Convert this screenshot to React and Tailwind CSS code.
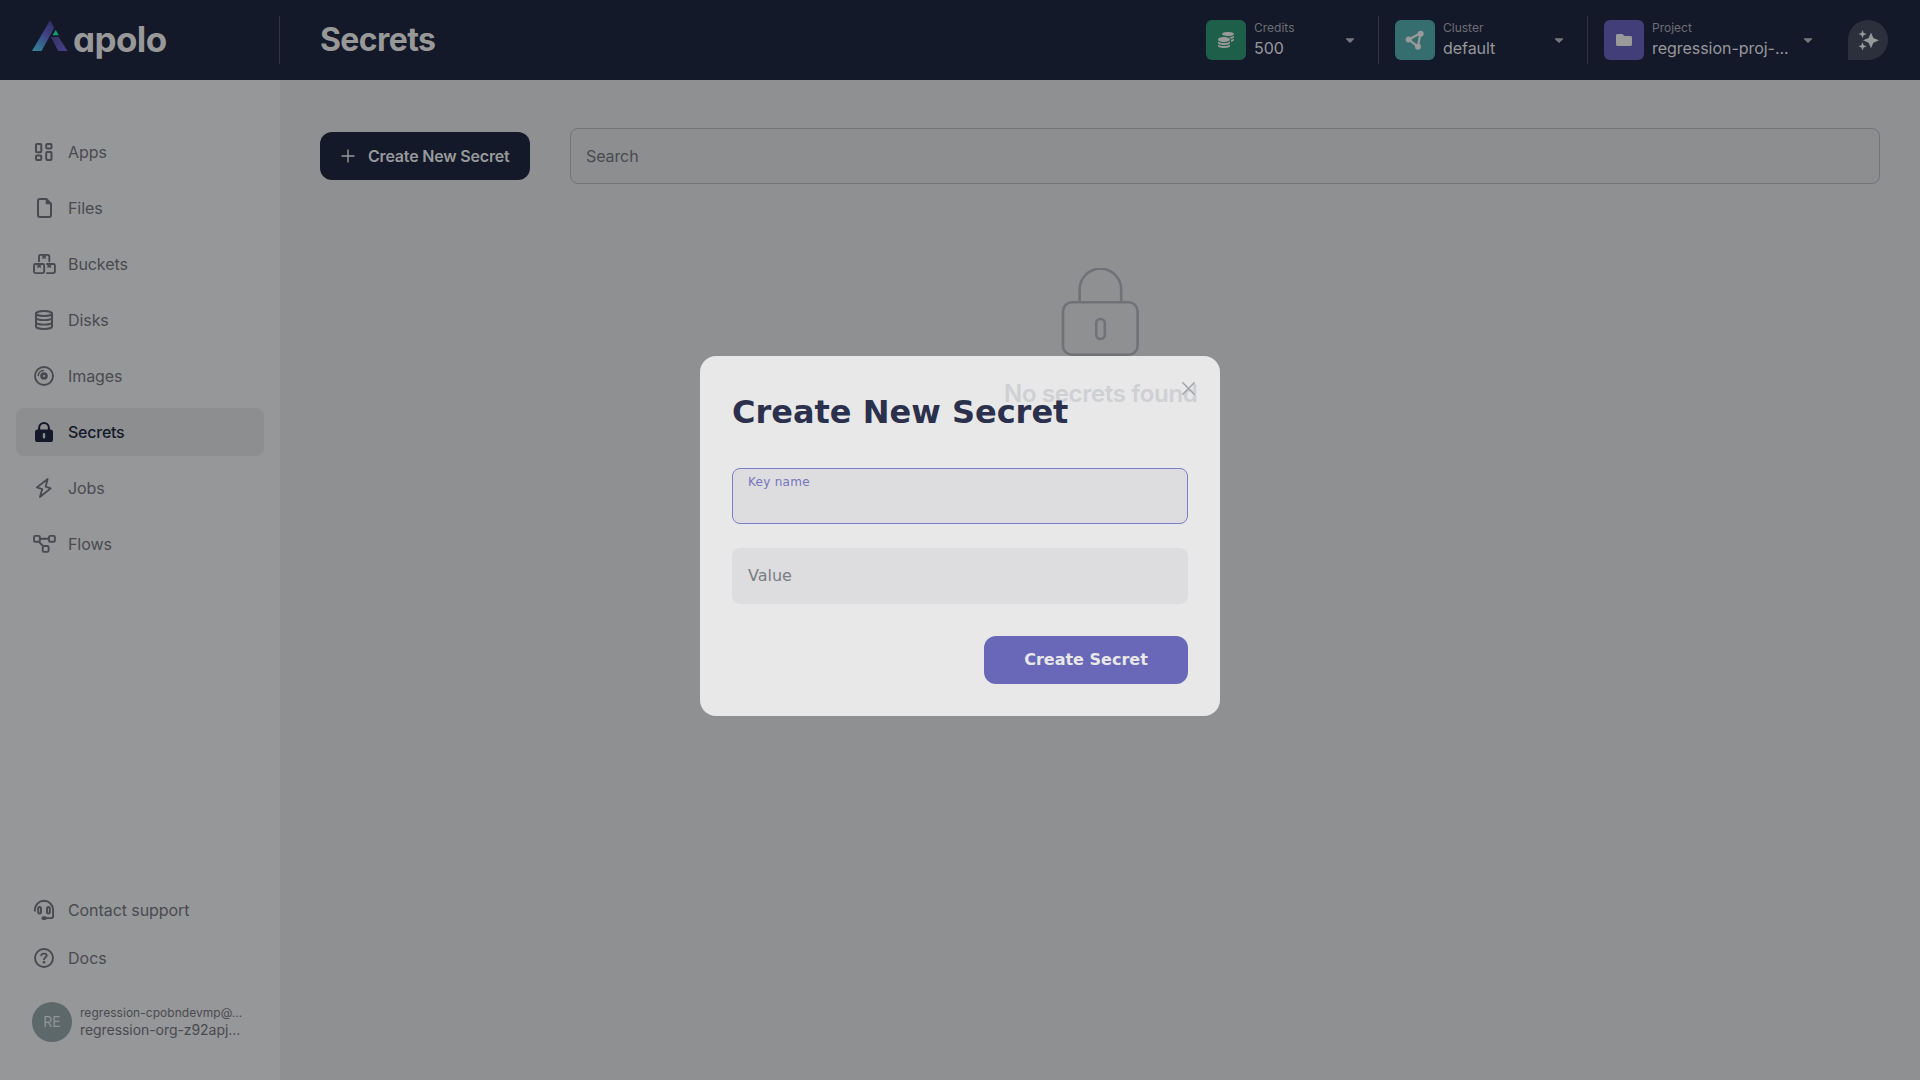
import React from "react";
import { FaCoins, FaCaretDown, FaFolder } from "react-icons/fa";

function Svg({ children, size = 24, className = "" }) {
  return (
    <svg
      width={size}
      height={size}
      viewBox="0 0 24 24"
      fill="none"
      stroke="currentColor"
      strokeWidth="2"
      strokeLinejoin="round"
      strokeLinecap="round"
      className={"shrink-0 overflow-visible " + className}
    >
      {children}
    </svg>
  );
}

const icons = {
  apps: (
    <Svg>
      <rect x="4" y="4" width="5.3" height="8.2" rx="1" />
      <rect x="4" y="15.6" width="5.3" height="4.5" rx="1" />
      <rect x="14.2" y="4" width="5.3" height="4.5" rx="1" />
      <rect x="14.2" y="11.9" width="5.3" height="8.2" rx="1" />
    </Svg>
  ),
  files: (
    <Svg>
      <path d="M14.4 3H7.9A1.9 1.9 0 0 0 6 4.900v14.200A1.900 1.900 0 0 0 7.900 21h9.200a1.900 1.900 0 0 0 1.900-1.900V7.600z" />
      <path d="M14.200 3v4.800H19z" fill="currentColor" strokeWidth="1" />
    </Svg>
  ),
  buckets: (
    <Svg>
      <path d="M7 9.300V4.400A1.500 1.500 0 0 1 8.500 2.900h7.300a1.500 1.500 0 0 1 1.500 1.500v4.900" strokeWidth="1.900" />
      <rect x="2" y="12" width="10.200" height="9.100" rx="1.500" strokeWidth="1.900" />
      <path d="M15 12h6.400a1.500 1.500 0 0 1 1.500 1.500v6.100a1.500 1.500 0 0 1-1.500 1.500h-6.400" strokeWidth="1.900" />
      <path
        d="M10.700 3.200h3v3.600l-1.500-.9-1.500.9zM5.600 12.200h3v3.600l-1.500-.9-1.500.9zM15.800 12.200h3v3.600l-1.500-.9-1.500.9z"
        fill="currentColor"
        strokeWidth="0.400"
      />
    </Svg>
  ),
  disks: (
    <Svg>
      <ellipse cx="12" cy="5.500" rx="8" ry="2.500" />
      <path d="M4 5.500v13c0 1.400 3.600 2.500 8 2.500s8-1.100 8-2.500v-13" />
      <path d="M4 9.700c0 1.400 3.600 2.500 8 2.500s8-1.100 8-2.500M4 14.200c0 1.400 3.600 2.500 8 2.500s8-1.100 8-2.500" strokeWidth="1.800" />
    </Svg>
  ),
  images: (
    <Svg>
      <circle cx="12" cy="12" r="9" strokeWidth="1.900" />
      <circle cx="12" cy="12" r="2.400" strokeWidth="2.800" />
      <path d="M6.300 11.600a5.500 5.500 0 0 1 5.200-5.200" strokeWidth="1.500" />
    </Svg>
  ),
  secrets: (
    <Svg>
      <path d="M7.100 11V7.900a4.900 4.900 0 0 1 9.800 0V11" strokeWidth="2.100" />
      <path
        d="M5.600 9.500h12.800A2.600 2.600 0 0 1 21 12.100v7.300a2.600 2.600 0 0 1-2.600 2.600H5.600A2.600 2.600 0 0 1 3 19.400v-7.300a2.600 2.600 0 0 1 2.600-2.600zM12 13a1.200 1.200 0 0 0-1.200 1.200v3a1.200 1.200 0 0 0 2.400 0v-3A1.200 1.200 0 0 0 12 13z"
        fill="currentColor"
        fillRule="evenodd"
        stroke="none"
      />
    </Svg>
  ),
  jobs: (
    <Svg>
      <path d="M15.700 3 4.900 11.400l5.300 1.800L7.900 21l10.800-8.600-5.100-1.800z" strokeWidth="1.800" />
    </Svg>
  ),
  flows: (
    <Svg>
      <rect x="2" y="3.900" width="5.900" height="5.900" rx="1.300" strokeWidth="1.900" />
      <rect x="17" y="3.900" width="5.900" height="5.900" rx="1.300" strokeWidth="1.900" />
      <rect x="10.700" y="14" width="5.900" height="5.900" rx="1.300" strokeWidth="1.900" />
      <path d="M8 6.800h9M7 9.800l4.300 4.600" strokeWidth="1.900" />
    </Svg>
  ),
  support: (
    <Svg>
      <path d="M2.900 12.800V11.900a9.100 9.100 0 0 1 18.200 0v6a2.200 2.200 0 0 1-2.200 2.200h-5" strokeWidth="1.900" />
      <rect x="6.200" y="9.100" width="2.800" height="6.400" rx="1.300" />
      <rect x="15" y="9.100" width="2.800" height="6.400" rx="1.300" />
      <path d="M11.300 20.100h1.700" strokeWidth="3.800" />
    </Svg>
  ),
  docs: (
    <Svg>
      <circle cx="12" cy="12" r="9" strokeWidth="1.900" />
      <path d="M9.300 9.400c.2-1.200 1.100-1.800 2.300-1.800h.8c1.300 0 2.300.8 2.300 2 0 1.800-2.600 1.900-2.600 3.600" strokeWidth="1.900" />
      <circle cx="12" cy="16.200" r="1.300" fill="currentColor" stroke="none" />
    </Svg>
  ),
};

const nav = [
  ["apps", "Apps"],
  ["files", "Files"],
  ["buckets", "Buckets"],
  ["disks", "Disks"],
  ["images", "Images"],
  ["secrets", "Secrets"],
  ["jobs", "Jobs"],
  ["flows", "Flows"],
];

function Logo() {
  return (
    <div className="flex items-center">
      <svg width="36" height="32" viewBox="0 0 36 32" className="mb-2 shrink-0">
        <defs>
          <linearGradient id="left" x1="0.1" y1="1" x2="0.8" y2="0">
            <stop offset="0" stopColor="#2f8795" />
            <stop offset="0.6" stopColor="#414285" />
            <stop offset="1" stopColor="#34306a" />
          </linearGradient>
          <linearGradient id="right" x1="0" y1="0" x2="1" y2="1">
            <stop offset="0" stopColor="#343363" />
            <stop offset="1" stopColor="#45408a" />
          </linearGradient>
        </defs>
        <path d="M0 31 18 0.500l4.300 7.200L9.500 31z" fill="url(#left)" />
        <path d="M18.800 17h7.900L35.500 31h-9.200z" fill="url(#right)" />
        <path d="m23.700 10 3.200 5.200h-6.400z" fill="#0f9f6c" />
      </svg>
      <span className="-mt-0.5 ml-[5px] text-[35px] leading-[40px] font-bold tracking-[-0.6px] text-[#989898] [font-feature-settings:'cv11']">
        apolo
      </span>
    </div>
  );
}

function Picker({ width, tile, icon, label, value, caret = "mr-[5px]" }) {
  return (
    <div className={"flex h-12 items-center px-4 " + width}>
      <div className={"flex size-10 shrink-0 items-center justify-center rounded-md text-[#9a9a9b] " + tile}>
        {icon}
      </div>
      <div className="ml-2 flex flex-col">
        <span className="text-xs leading-4 text-[#6c6d73]">{label}</span>
        <span className="text-base leading-6 tracking-[-0.04px] whitespace-nowrap text-[#97989a]">{value}</span>
      </div>
      <FaCaretDown className={"ml-auto size-3.5 shrink-0 text-[#77787d] " + caret} />
    </div>
  );
}

export default function App() {
  return (
    <div className="relative flex h-[1080px] w-[1920px] flex-col overflow-hidden bg-[#8f9092] font-['Inter',sans-serif] text-base text-[#494a51]">
      <header className="flex h-20 shrink-0 items-center bg-[#14192a]">
        <div className="flex h-12 w-[280px] items-center border-r border-[#33343f] pl-8">
          <Logo />
        </div>
        <h1 className="ml-10 text-[32px] leading-10 font-bold tracking-[-0.6px] text-[#989899]">Secrets</h1>
        <div className="ml-auto flex items-center pr-8">
          <Picker width="w-[188px]" tile="bg-[#1e5f49]" icon={<FaCoins className="size-4" />} label="Credits" value="500" />
          <div className="h-12 w-px bg-[#33343f]" />
          <Picker
            width="w-[208px]"
            tile="bg-[#366e70]"
            icon={
              <Svg size={20}>
                <path d="m4.500 11.500 14-7.500-3 16z" strokeWidth="2.700" />
                <circle cx="4.500" cy="11.500" r="3.600" fill="currentColor" stroke="none" />
                <circle cx="18.800" cy="4.500" r="3.600" fill="currentColor" stroke="none" />
                <circle cx="15.500" cy="20" r="3.600" fill="currentColor" stroke="none" />
              </Svg>
            }
            label="Cluster"
            value="default"
          />
          <div className="h-12 w-px bg-[#33343f]" />
          <Picker
            width="w-[244px]"
            tile="bg-[#413e78]"
            icon={<FaFolder className="size-4" />}
            label="Project"
            value="regression-proj-..."
            caret="mr-px"
          />
          <div className="ml-4 flex size-10 items-center justify-center rounded-full rounded-bl-none bg-[#2b303c] text-[#98999a]">
            <svg width="20" height="20" viewBox="0 0 20 20" fill="currentColor" className="overflow-visible">
              <path d="M13 2.500 15.400 8l5.600 2.300-5.600 2.400-2.400 5.500-2.400-5.500L5 10.300 10.600 8z" />
              <path d="m4.500 0 1.200 2.900L8.700 4 5.700 5.200 4.500 8 3.400 5.200.5 4l2.900-1.100zM4.500 12.300l1.200 2.900 3 1.100-3 1.200-1.200 2.800-1.100-2.800-2.900-1.200 2.900-1.100z" />
            </svg>
          </div>
        </div>
      </header>

      <div className="flex flex-1">
        <aside className="flex w-[280px] flex-col bg-[#969798] px-4 pt-12 pb-[38px]">
          <nav className="flex flex-col gap-2">
            {nav.map(([id, label]) => (
              <a
                key={id}
                className={
                  "flex h-12 items-center gap-3 rounded-lg px-4 " +
                  (id === "secrets"
                    ? "bg-[#8d8e90] font-medium tracking-[-0.24px] text-[#14192a]"
                    : "tracking-[-0.08px]")
                }
              >
                {icons[id]}
                <span>{label}</span>
              </a>
            ))}
          </nav>
          <div className="mt-auto flex flex-col">
            <a className="flex h-12 items-center gap-3 px-4 tracking-[-0.08px]">
              {icons.support}
              <span>Contact support</span>
            </a>
            <a className="flex h-12 items-center gap-3 px-4">
              {icons.docs}
              <span>Docs</span>
            </a>
            <div className="mt-5 flex items-center gap-2 px-4">
              <div className="flex size-10 shrink-0 items-center justify-center rounded-full bg-[#5d686a] text-sm text-[#8f9496]">
                RE
              </div>
              <div className="flex flex-col whitespace-nowrap">
                <span className="text-xs leading-4 tracking-[0.04px]">regression-cpobndevmp@...</span>
                <span className="text-sm leading-[18px] tracking-[-0.06px]">regression-org-z92apj...</span>
              </div>
            </div>
          </div>
        </aside>

        <main className="flex flex-1 flex-col px-10 pt-12">
          <div className="flex items-center gap-10">
            <button className="flex h-12 w-[210px] items-center rounded-xl bg-[#14192a] pl-5 font-semibold text-[#98999a]">
              <svg width="16" height="16" viewBox="0 0 16 16" stroke="currentColor" strokeWidth="1.400" strokeLinecap="round">
                <path d="M8 2v12M2 8h12" />
              </svg>
              <span className="ml-3 tracking-[-0.19px] whitespace-nowrap">Create New Secret</span>
            </button>
            <div className="flex h-14 flex-1 items-center rounded-lg border border-[#737479] bg-[#8d8e90] px-[15px] tracking-[-0.1px]">
              Search
            </div>
          </div>
          <div className="mt-[84px] flex flex-col items-center">
            <svg width="78" height="89" viewBox="0 0 78 89" fill="none" stroke="#717278" strokeWidth="2.600">
              <path d="M18.600 34V21.500a20.800 20.800 0 0 1 41.600 0V34" />
              <rect x="2" y="34.300" width="74.600" height="52.500" rx="9" />
              <rect x="35.200" y="51" width="8.600" height="20" rx="4.300" />
            </svg>
          </div>
        </main>
      </div>

      <div className="absolute top-[356px] left-[700px] flex h-[360px] w-[520px] flex-col rounded-2xl bg-[#e8e8e8] p-8 font-['DejaVu_Sans',sans-serif]">
        <span className="absolute top-[22px] left-[304px] font-['Inter',sans-serif] text-2xl leading-8 font-semibold tracking-[-0.33px] whitespace-nowrap text-[#cfd0d4]">
          No secrets found
        </span>
        <h2 className="relative mt-1 text-[32px] leading-10 font-bold whitespace-nowrap text-[#2b304c]">Create New Secret</h2>
        <div className="mt-9 flex h-14 shrink-0 items-start rounded-lg border border-[#7f7dc5] bg-[#dddddf] px-[15px] pt-[5px] text-xs leading-4 tracking-[0.28px] text-[#7775bd]">
          Key name
        </div>
        <div className="mt-6 flex h-14 shrink-0 items-center rounded-lg bg-[#dddddf] px-4 text-[#7b7c83]">Value</div>
        <button className="mt-8 h-12 w-[204px] shrink-0 self-end rounded-xl bg-[#6967b8] font-bold text-[#e8e8e8]">Create Secret</button>
        <svg
          className="absolute top-[26px] right-[25px]"
          width="13"
          height="13"
          viewBox="0 0 13 13"
          stroke="#a3a4aa"
          strokeWidth="1.500"
          strokeLinecap="round"
        >
          <path d="m.8.800 11.400 11.400M12.200.8.800 12.200" />
        </svg>
      </div>
    </div>
  );
}
